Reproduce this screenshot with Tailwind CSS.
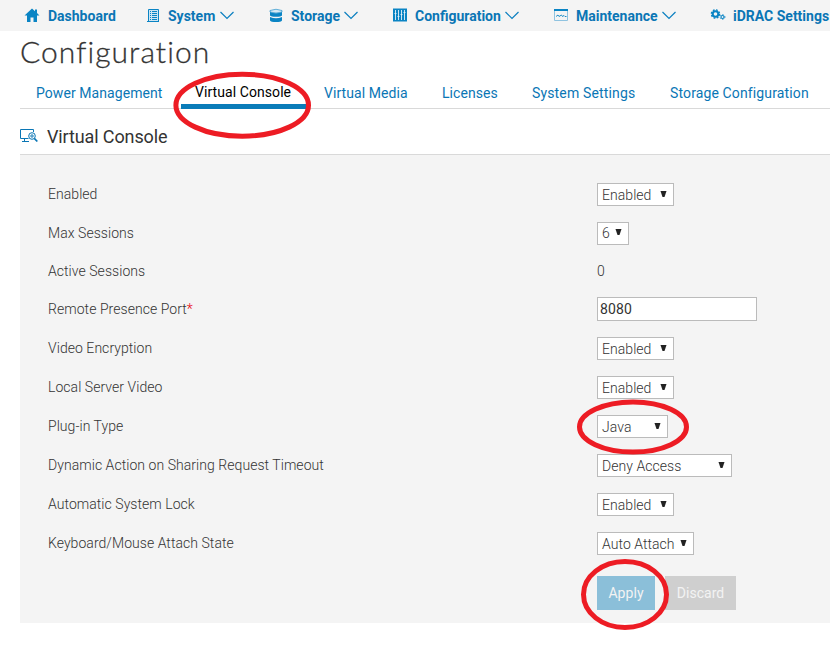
<!DOCTYPE html>
<html lang="en"><head><meta charset="utf-8"><title>Configuration</title>
<script src="https://cdn.jsdelivr.net/npm/@tailwindcss/browser@4"></script></head>
<body class="relative w-[830px] h-[646px] overflow-hidden bg-white font-['Roboto',sans-serif] text-[14px] text-[#333]">
<nav class="flex h-[31px] items-center bg-[#f4f4f4] pl-[24px] pt-px text-[14px] font-bold text-[#0a76b5] whitespace-nowrap">
 <div class="flex w-[122px] items-center gap-[8px]"><svg class="size-4" viewBox="0 0 16 16" fill="#0a84c4"><path d="M8 .5.500 7.500H3V14h3.500V9.500h3V14H13V7.500h2.500L13 5V1.500h-2v1.800z"/></svg><span>Dashboard</span></div>
 <div class="flex w-[121px] items-center"><svg class="mr-[7px] h-4 w-[15px]" viewBox="0 0 15 16" fill="none" stroke="#0a84c4"><path fill="#cfe6f3" d="M2.500 1.500h10v12h-10z"/><path d="M1 13.500h12M6 3.500h5M6 5.500h5M6 7.500h5M6 9.500h5M6 11.500h5M4 3.500h1M4 5.500h1M4 7.500h1M4 9.500h1M4 11.500h1"/></svg><span>System</span><svg class="ml-[5px] h-4 w-[14px]" viewBox="0 0 14 16" fill="none" stroke="#0a7fc0" stroke-width="1.200"><path d="m.5 4 6.500 6.500 6.500-6.500"/></svg></div>
 <div class="flex w-[125px] items-center"><svg class="mr-[8px] size-4" viewBox="0 0 16 16" fill="#0a84c4"><path d="M3 2.500q6-2.500 12 0V4q-6 2-12 0z" fill="#d5e9f4" stroke="#0a84c4" stroke-width=".6"/><path d="M3 4q6 2.500 12 0v3.500q-1 1.300-6 1.300T3 7.500zM3 9q6 2.500 12 0v3.500q-1 1.500-6 1.500t-6-1.500z"/></svg><span>Storage</span><svg class="ml-1 h-4 w-[14px]" viewBox="0 0 14 16" fill="none" stroke="#0a7fc0" stroke-width="1.200"><path d="m.5 4 6.500 6.500 6.500-6.500"/></svg></div>
 <div class="flex w-[161px] items-center"><svg class="mr-[7px] size-4" viewBox="0 0 16 16"><path fill="#0a84c4" d="M1 .500h14v13H1z"/><path stroke="#e4f1f8" stroke-width=".9" d="M3.500 2v10M6.500 2v10M9.500 2v10M12.500 2v10M2.500 5.500h2M5.500 8.500h2M8.500 6.500h2M11.500 4.500h2"/></svg><span>Configuration</span><svg class="ml-1 h-4 w-[14px]" viewBox="0 0 14 16" fill="none" stroke="#0a7fc0" stroke-width="1.200"><path d="m.5 4 6.500 6.500 6.500-6.500"/></svg></div>
 <div class="flex w-[157px] items-center"><svg class="mr-[7px] size-4" viewBox="0 0 16 16" fill="none" stroke="#0a84c4"><path d="M1.500 2v10.500h13V2" stroke="#8fc3e0"/><path d="M1 2h14" stroke-width="2"/><path d="M3 8.500 5 7l1 1.500L8.500 7l1 1.500L11 7.500l1 1h1.500" stroke-width=".9"/></svg><span>Maintenance</span><svg class="ml-1 h-4 w-[14px]" viewBox="0 0 14 16" fill="none" stroke="#0a7fc0" stroke-width="1.200"><path d="m.5 4 6.500 6.500 6.500-6.500"/></svg></div>
 <div class="flex items-center gap-[7px]"><svg class="size-4" viewBox="0 0 16 16" fill="none" stroke="#0a84c4"><circle cx="5.500" cy="6" r="2.800" stroke-width="2"/><circle cx="5.500" cy="6" r="4.100" stroke-width="1.400" stroke-dasharray="1.800 1.420"/><circle cx="12.500" cy="9" r="1.500" stroke-width="1.100"/><circle cx="12.500" cy="9" r="2.400" stroke-width=".9" stroke-dasharray="1.200 1.310"/></svg><span>iDRAC Settings</span></div>
</nav>
<main class="ml-[20px]">
 <h1 class="h-[45px] font-['Lato',sans-serif] text-[30px] leading-[41px] font-light tracking-[1.050px] [-webkit-text-stroke:0.3px_#333]"><span>Configuration</span></h1>
 <div class="flex h-[33px] border-b border-[#d9d9d9] pl-[16px] text-[14px] leading-[34px] tracking-[0.070px] text-[#0a76b5] whitespace-nowrap">
  <span class="w-[145px]">Power Management</span><div class="h-[33px] w-[125px] border-b-[5px] border-[#0a7cb9] pl-[14px] leading-[33px] text-black"><span>Virtual Console</span></div><span class="ml-[18px] w-[118px]">Virtual Media</span><span class="w-[90px]">Licenses</span><span class="w-[138px] tracking-[0.150px]">System Settings</span><span class="tracking-[0.130px]">Storage Configuration</span>
 </div>
 <div class="flex h-[46px] items-center gap-[9px] border-b border-[#d9d9d9] pt-[9px]"><svg class="h-4 w-[18px]" viewBox="0 0 18 16" fill="none" stroke="#0a76b5"><path d="M13.500 4V1.500H.5v9h8M4.500 10.500v3M2 13.500h7"/><circle cx="12" cy="8" r="3.300"/><path d="m14.300 10.300 3 3.200" stroke-width="1.700"/><circle cx="12" cy="8" r="1.200"/></svg><h2 class="text-[18px] tracking-[-0.120px]">Virtual Console</h2></div>
 <section class="h-[468px] bg-[#f4f4f4] pt-[20px] pl-[28px] font-light tracking-[0.050px]">
  <div class="grid grid-cols-[549px_1fr] grid-rows-[39px_38px_38px_39px_39px_39px_39px_39px_39px_39px] items-center">
   <span>Enabled</span><div class="flex h-[23px] w-[77px] items-center justify-between border border-[#bbb] bg-white pr-[6px] pl-1"><span class="pt-px">Enabled</span><svg class="h-2 w-[7px]" viewBox="0 0 7 8"><path d="M.5 0h6l-2 6h-2z" fill="#222"/></svg></div>
   <span>Max Sessions</span><div class="flex h-[23px] w-[32px] items-center justify-between border border-[#bbb] bg-white pr-[6px] pl-1"><span class="pt-px">6</span><svg class="h-2 w-[7px]" viewBox="0 0 7 8"><path d="M.5 0h6l-2 6h-2z" fill="#222"/></svg></div>
   <span>Active Sessions</span><span>0</span>
   <span>Remote Presence Port<b class="font-light text-red-600">*</b></span><div class="mb-px flex h-[24px] w-[160px] items-center border border-[#bbb] bg-white pl-[2px] pt-px font-normal tracking-[0.100px]">8080</div>
   <span>Video Encryption</span><div class="flex h-[23px] w-[77px] items-center justify-between border border-[#bbb] bg-white pr-[6px] pl-1"><span class="pt-px">Enabled</span><svg class="h-2 w-[7px]" viewBox="0 0 7 8"><path d="M.5 0h6l-2 6h-2z" fill="#222"/></svg></div>
   <span>Local Server Video</span><div class="flex h-[23px] w-[77px] items-center justify-between border border-[#bbb] bg-white pr-[6px] pl-1"><span class="pt-px">Enabled</span><svg class="h-2 w-[7px]" viewBox="0 0 7 8"><path d="M.5 0h6l-2 6h-2z" fill="#222"/></svg></div>
   <span>Plug-in Type</span><div class="flex h-[23px] w-[71px] items-center justify-between border border-[#bbb] bg-white pr-[6px] pl-1"><span class="pt-px">Java</span><svg class="h-2 w-[7px]" viewBox="0 0 7 8"><path d="M.5 0h6l-2 6h-2z" fill="#222"/></svg></div>
   <span>Dynamic Action on Sharing Request Timeout</span><div class="flex h-[23px] w-[135px] items-center justify-between border border-[#bbb] bg-white pr-[6px] pl-1"><span class="pt-px">Deny Access</span><svg class="h-2 w-[7px]" viewBox="0 0 7 8"><path d="M.5 0h6l-2 6h-2z" fill="#222"/></svg></div>
   <span>Automatic System Lock</span><div class="flex h-[23px] w-[77px] items-center justify-between border border-[#bbb] bg-white pr-[6px] pl-1"><span class="pt-px">Enabled</span><svg class="h-2 w-[7px]" viewBox="0 0 7 8"><path d="M.5 0h6l-2 6h-2z" fill="#222"/></svg></div>
   <span>Keyboard/Mouse Attach State</span><div class="flex h-[23px] w-[97px] items-center justify-between border border-[#bbb] bg-white pr-[6px] pl-1"><span class="pt-px">Auto Attach</span><svg class="h-2 w-[7px]" viewBox="0 0 7 8"><path d="M.5 0h6l-2 6h-2z" fill="#222"/></svg></div>
  </div>
  <div class="mt-[13px] ml-[549px] flex gap-[10px] font-normal text-[#f3f3f3]"><button class="h-[34px] w-[58px] bg-[#8bbfd9]">Apply</button><button class="h-[34px] w-[71px] bg-[#cfcfcf]">Discard</button></div>
 </section>
</main>
<svg class="pointer-events-none absolute inset-0" width="830" height="646" fill="none" stroke="#ed1c24" stroke-width="5"><ellipse cx="242.200" cy="105.200" rx="66.300" ry="31"/><ellipse cx="633" cy="427" rx="53.500" ry="25"/><ellipse cx="625" cy="594.500" rx="41.500" ry="33"/></svg>
</body></html>
